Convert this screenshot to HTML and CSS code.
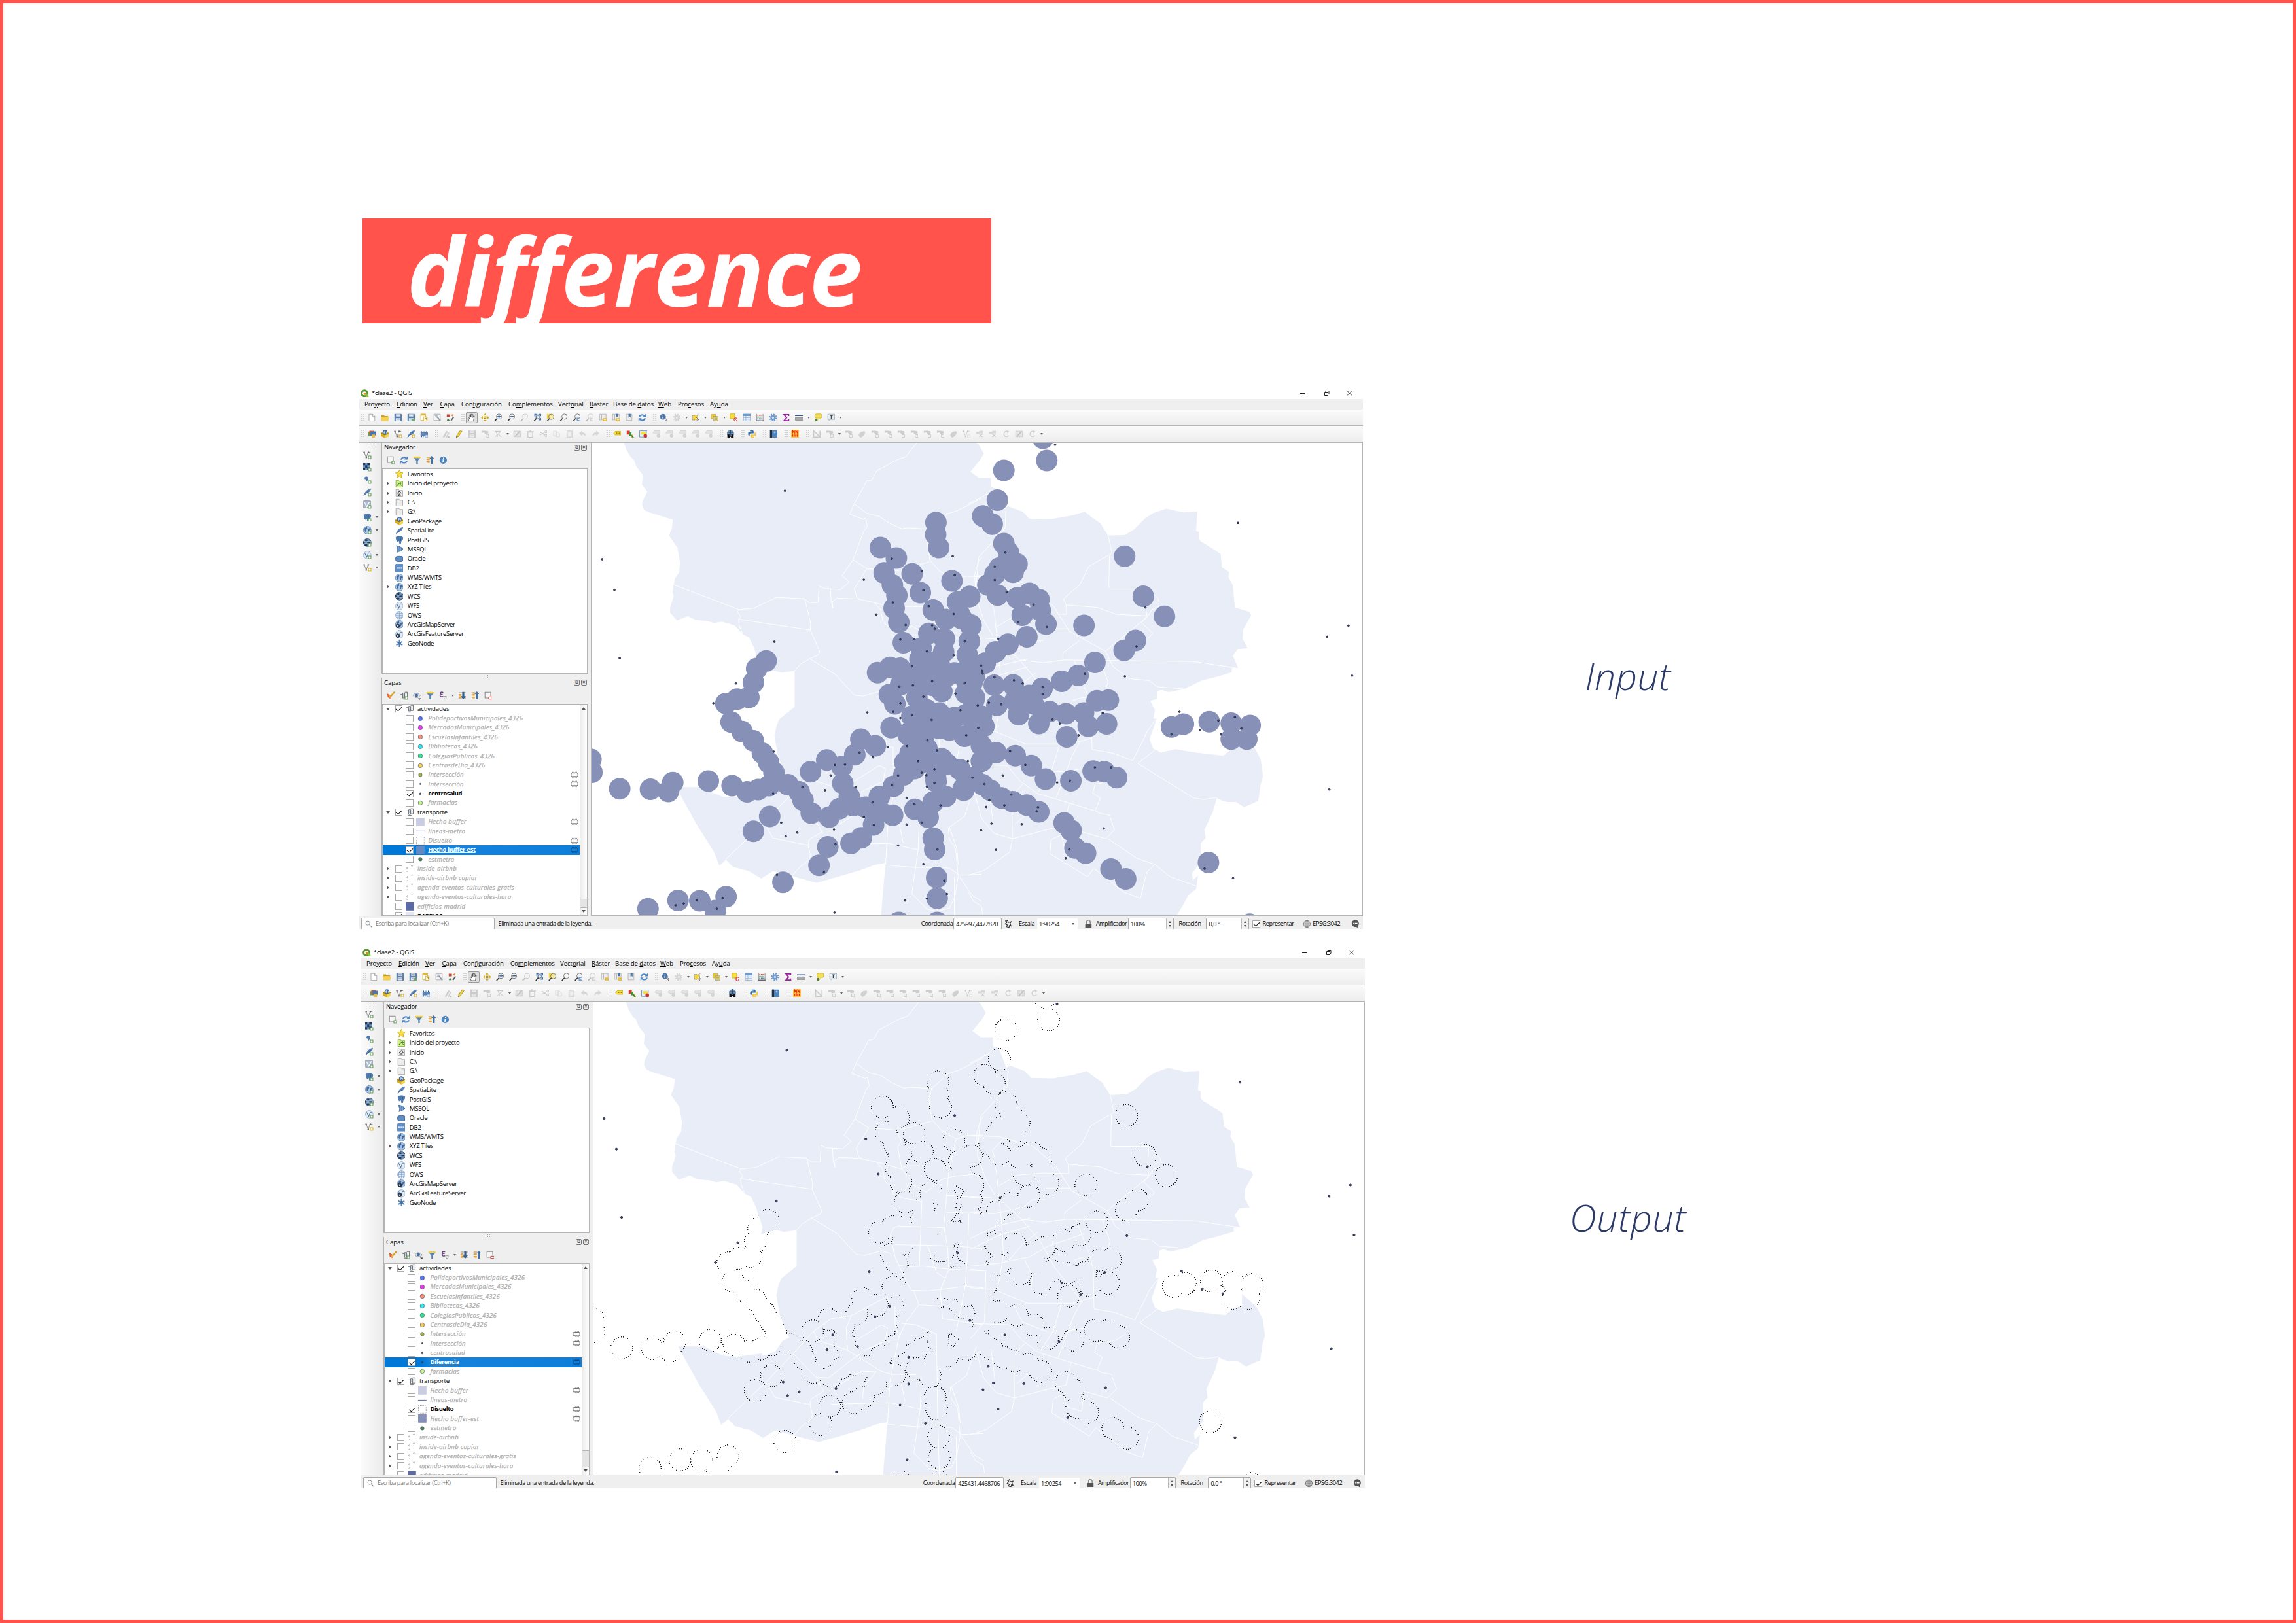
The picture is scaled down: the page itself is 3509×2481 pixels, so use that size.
FILE: index.html
```html
<!DOCTYPE html>
<html lang="es">
<head>
<meta charset="utf-8">
<title>difference</title>
<link rel="stylesheet" href="styles.css">
</head>
<body>
<svg class="sprite" aria-hidden="true">
  <symbol id="i-qgis" viewBox="0 0 16 16"><circle cx="7.6" cy="7.8" r="5.6" fill="none" stroke="#589632" stroke-width="3.6"/><path d="M8 8h4l3.6 4.500V15.500H12.500L8 11z" fill="#8bbf3c"/><circle cx="8" cy="8" r="2" fill="#ee7913"/></symbol>
  <symbol id="i-new" viewBox="0 0 16 16"><path d="M2.500 1.500h7l4 4v9h-11z" fill="#fff" stroke="#999"/><path d="M9.500 1.500v4h4" fill="none" stroke="#999"/></symbol>
  <symbol id="i-open" viewBox="0 0 16 16"><path d="M1 3h5l1.500 2H14v9H1z" fill="#c9a227"/><path d="M1 6.500h15L14 14H1z" fill="#f7d04f"/></symbol>
  <symbol id="i-save" viewBox="0 0 16 16"><path d="M1 1h13l1 1v13H1z" fill="#5b7fa8"/><path d="M4 1.500h8V6H4zM3.500 9h9v5.500h-9z" fill="#dfe6ee"/><path d="M5 3h6M5 11h6" stroke="#7b97b8"/></symbol>
  <symbol id="i-saveas" viewBox="0 0 16 16"><use href="#i-save"/><path d="M8 15l2-5 5 1v4z" fill="#72a36a"/></symbol>
  <symbol id="i-layout" viewBox="0 0 16 16"><path d="M1.500 1.500h9v12h-9z" fill="#fff" stroke="#b89a2a"/><path d="M1 1h10v3H1z" fill="#e2b53a"/><path d="M6.500 6.500h7v8h-7z" fill="#fdf3c9" stroke="#c9a227"/><path d="M9 9h3v3" fill="none" stroke="#8a6d10"/></symbol>
  <symbol id="i-manager" viewBox="0 0 16 16"><path d="M1.500 1.500h12v12h-12z" fill="#f6f6f6" stroke="#999"/><path d="M3 4h6M3 7h3" stroke="#aaa"/><path d="M6 5l8 9" stroke="#8c98a8" stroke-width="2.400"/><circle cx="6" cy="5" r="2" fill="#a9b8ca"/></symbol>
  <symbol id="i-style" viewBox="0 0 16 16"><path d="M1 2h6v5H1z" fill="#c1463c"/><circle cx="12" cy="3.500" r="2" fill="#d78a3a"/><path d="M3 9l4 5H1z" fill="#3f7d4b"/><path d="M9 14l5-7" stroke="#566" stroke-width="2.400"/></symbol>
  <symbol id="i-pan" viewBox="0 0 16 16"><path d="M4 15L1.500 9l1-.8L5 10V3.200l1.400-.4L7 7V1.600h1.500L9 7l.8-4.800h1.400L11 8l1.600-3.600 1.200.6L12.500 11 12 15z" fill="#fff" stroke="#333" stroke-width=".9"/></symbol>
  <symbol id="i-pansel" viewBox="0 0 16 16"><path d="M5 5h6v6H5z" fill="#f5d442"/><path d="M8 0l3 3.500H5zM8 16l3-3.500H5zM0 8l3.500-3v6zM16 8l-3.500-3v6z" fill="#d6a60d"/><path d="M6 7h4M6 9.500h4" stroke="#4f74a1"/></symbol>
  <symbol id="i-zoom" viewBox="0 0 16 16"><circle cx="9.500" cy="6" r="5" fill="#f4f6f8" stroke="#777" stroke-width="1.200"/><path d="M5.800 9.700L1 15" stroke="#333" stroke-width="2"/></symbol>
  <symbol id="i-zoomin" viewBox="0 0 16 16"><use href="#i-zoom"/><path d="M9.500 3v6M6.500 6h6" stroke="#3d6aa3" stroke-width="2"/></symbol>
  <symbol id="i-zoomout" viewBox="0 0 16 16"><use href="#i-zoom"/><path d="M6.500 6h6" stroke="#3d6aa3" stroke-width="2"/></symbol>
  <symbol id="i-zoomfull" viewBox="0 0 16 16"><path d="M2 1h5L2 6zM15 1v5l-5-5zM15 13V8l-5 5z" fill="#3d6aa3"/><path d="M4 2h9v9H4z" fill="#6e96c4" opacity=".7"/><circle cx="8.500" cy="7" r="3.200" fill="#dfe9f3" stroke="#667"/><path d="M6 9.500L1 15" stroke="#333" stroke-width="2"/></symbol>
  <symbol id="i-zoomsel" viewBox="0 0 16 16"><path d="M1 1h9v9H1z" fill="#f5d442"/><circle cx="9.500" cy="6.500" r="5" fill="#f8ec9e" stroke="#777" stroke-width="1.200"/><path d="M5.800 10L1 15" stroke="#333" stroke-width="2"/></symbol>
  <symbol id="i-zoomlast" viewBox="0 0 16 16"><use href="#i-zoom"/><path d="M8 8h7v7H8z" fill="#7c9dc4"/><path d="M13.500 9.500L10 11.500l3.500 2z" fill="#fff"/></symbol>
  <symbol id="i-view" viewBox="0 0 16 16"><path d="M1.500 1.500h3v11h-3zM5.500 1.500h8.500v11H5.500z" fill="#eee" stroke="#aaa"/><path d="M8 9h7v6H8z" fill="#e8bd3d"/><path d="M10 12h4" stroke="#fff"/></symbol>
  <symbol id="i-viewmark" viewBox="0 0 16 16"><use href="#i-view"/><path d="M8 1h4v7l-2-2-2 2z" fill="#4876ad"/></symbol>
  <symbol id="i-mark" viewBox="0 0 16 16"><path d="M2.500 1.500h11v12h-11z" fill="#eee" stroke="#aaa"/><path d="M7 1h4v7L9 6 7 8z" fill="#4876ad"/></symbol>
  <symbol id="i-refresh" viewBox="0 0 16 16"><path d="M2.500 7A5.500 5 0 0 1 12 4.500M13.500 9A5.500 5 0 0 1 4 11.500" fill="none" stroke="#4b86c6" stroke-width="2.600"/><path d="M15 1v6H9zM1 15V9h6z" fill="#4b86c6"/></symbol>
  <symbol id="i-identify" viewBox="0 0 16 16"><circle cx="6.500" cy="6.500" r="5.500" fill="#4876ad"/><path d="M6.500 3v1.500M6.500 6v4" stroke="#fff" stroke-width="1.800"/><path d="M9 8l6 4-3 .5L13.500 15" fill="#fff" stroke="#555"/></symbol>
  <symbol id="i-gear" viewBox="0 0 16 16"><circle cx="8" cy="8" r="5" fill="#6f9bcf"/><circle cx="8" cy="8" r="6" fill="none" stroke="#6f9bcf" stroke-width="3" stroke-dasharray="2.300 2.412"/><circle cx="8" cy="8" r="2" fill="#dbe6f3"/></symbol>
  <symbol id="i-select" viewBox="0 0 16 16"><path d="M1.500 3.500h10v9h-10z" fill="#f5d442" stroke="#777" stroke-dasharray="2 1"/><path d="M11 1.500h3.500V6" fill="none" stroke="#777" stroke-dasharray="2 1"/><path d="M8 7l6 5-3 .3L12.500 16" fill="#fff" stroke="#555"/></symbol>
  <symbol id="i-selform" viewBox="0 0 16 16"><path d="M1 2h9v8H1z" fill="#f0cf3b" stroke="#9a8a3a" stroke-width=".6"/><path d="M5 6h10v8H5z" fill="#f3dc6b" stroke="#888"/><path d="M7 9h6M7 11.500h6" stroke="#887"/></symbol>
  <symbol id="i-desel" viewBox="0 0 16 16"><path d="M1 1h9v9H1z" fill="#f7df3f" stroke="#c9a80f"/><circle cx="12" cy="12" r="3.400" fill="#fff" stroke="#dd3b3b" stroke-width="1.400"/><path d="M10 10l4 4" stroke="#dd3b3b"/></symbol>
  <symbol id="i-table" viewBox="0 0 16 16"><path d="M1.500 1.500h13v13h-13z" fill="#e8f0f8" stroke="#8aa9cc"/><path d="M1 1h14v4H1z" fill="#6f9bcf"/><path d="M2 8h12M2 11h12M6 5v9" stroke="#8aa9cc"/></symbol>
  <symbol id="i-abacus" viewBox="0 0 16 16"><path d="M2 1v13M14 1v13" stroke="#888"/><path d="M3 3.500h10" stroke="#cc4b4b" stroke-width="2" stroke-dasharray="2 1"/><path d="M3 7h10" stroke="#4f9d5b" stroke-width="2" stroke-dasharray="1.500 1"/><path d="M3 10.500h10" stroke="#4876ad" stroke-width="2" stroke-dasharray="2 1"/><path d="M0 13h16v2.500H0z" fill="#666"/></symbol>
  <symbol id="i-sigma" viewBox="0 0 16 16"><path d="M13 5V2.200H4L9 8l-5 5.800h9V11" fill="none" stroke="#9b1fa0" stroke-width="2.200"/></symbol>
  <symbol id="i-ruler" viewBox="0 0 16 16"><path d="M0 4h16" stroke="#36558a" stroke-width="2"/><path d="M.5 8h15v5H.5z" fill="#aaa" stroke="#888"/></symbol>
  <symbol id="i-tip" viewBox="0 0 16 16"><rect x="2" y="1" width="13" height="8" rx="3" fill="#f5e05b" stroke="#c5ab1d"/><path d="M6 9l1 4 4-4z" fill="#f5e05b"/><circle cx="4" cy="12.500" r="2.800" fill="#5a7a3a"/></symbol>
  <symbol id="i-text" viewBox="0 0 16 16"><path d="M1.500 1.500h13v10h-8L4 14v-2.500H1.500z" fill="#e6f0f4" stroke="#9ab"/><path d="M5 4h6M8 4v6" stroke="#444" stroke-width="1.600"/></symbol>
  <symbol id="i-source" viewBox="0 0 16 16"><path d="M1 4h8v8H1z" fill="#5fa15a"/><path d="M3 2h9v8H3z" fill="#d5602f"/><path d="M5 3h10v8H5z" fill="#4876ad"/><path d="M8 9h6v6H8z" fill="#e8bd3d"/></symbol>
  <symbol id="i-geopkg" viewBox="0 0 16 16"><path d="M0 6l8-3 8 3v6l-8 4-8-4z" fill="#d9ac20"/><path d="M8 9v7l8-4V6z" fill="#f3d94e"/><circle cx="8" cy="5" r="4.600" fill="#44699b"/><path d="M5 4l3-2 1 3-3 3zM10 3l2 2-2 3z" fill="#b9cde6"/><path d="M0 6l8 4 8-4" fill="none" stroke="#8c6b0b"/></symbol>
  <symbol id="i-vec" viewBox="0 0 16 16"><path d="M2 3l4 10L9.500 3H14" fill="none" stroke="#888" stroke-width="1.200"/><circle cx="2" cy="3" r="1.500" fill="#666"/><circle cx="6" cy="13" r="1.500" fill="#666"/><circle cx="10" cy="3" r="1.500" fill="#666"/></symbol>
  <symbol id="i-vecnew" viewBox="0 0 16 16"><use href="#i-vec"/><path d="M10 10h5v5h-5z" fill="#fff" stroke="#d9a90d" stroke-width="1.500"/></symbol>
  <symbol id="i-vecadd" viewBox="0 0 16 16"><use href="#i-vec"/><path d="M10 10h5v5h-5z" fill="#fff" stroke="#5c9c55" stroke-width="1.500"/></symbol>
  <symbol id="i-feather" viewBox="0 0 16 16"><path d="M1 15C3 7 8 2 15 1c0 5-5 9-10 10z" fill="#5b84b5"/><path d="M1 15L11 5" stroke="#2d4f7c"/></symbol>
  <symbol id="i-feathernew" viewBox="0 0 16 16"><use href="#i-feather"/><path d="M10 10h5v5h-5z" fill="#fff" stroke="#d9a90d" stroke-width="1.500"/></symbol>
  <symbol id="i-featheradd" viewBox="0 0 16 16"><use href="#i-feather"/><path d="M10 10h5v5h-5z" fill="#fff" stroke="#5c9c55" stroke-width="1.500"/></symbol>
  <symbol id="i-mem" viewBox="0 0 16 16"><path d="M1 5h14v7H1z" fill="#5b84b5"/><path d="M3 3v2M6 3v2M9 3v2M12 3v2M3 12v2M6 12v2" stroke="#2d4f7c" stroke-width="1.500"/><path d="M10 10h5v5h-5z" fill="#d9e5f3" stroke="#6f9bcf"/></symbol>
  <symbol id="i-edits" viewBox="0 0 16 16"><path d="M2 14L9 2l3 2-7 11zM8 14l5-9 2 1-5 9z" fill="#888"/><path d="M11 13h5l-2.500 3z" fill="#333"/></symbol>
  <symbol id="i-pencil" viewBox="0 0 16 16"><path d="M3 15l1-5L11 1l3 2-7 10z" fill="#f0cf3b" stroke="#8c7410" stroke-width=".8"/><path d="M3 15l.6-3 2 1.400z" fill="#333"/></symbol>
  <symbol id="i-poly" viewBox="0 0 16 16"><path d="M1 2h8l5 1v4L8 8 6 5 1 6z" fill="#777"/><path d="M9.500 9.500h5v5h-5z" fill="#eee" stroke="#666"/></symbol>
  <symbol id="i-node" viewBox="0 0 16 16"><path d="M2 3h11M4 3l3 10M3 13l9-9M8 8l6 6" stroke="#777" stroke-width="1.400" fill="none"/></symbol>
  <symbol id="i-form" viewBox="0 0 16 16"><path d="M1.500 2.500h13v11h-13z" fill="#aaa" stroke="#777"/><path d="M2 6h12M2 10h12M7 3v10" stroke="#eee"/><path d="M4 13l9-10" stroke="#555" stroke-width="2"/></symbol>
  <symbol id="i-trash" viewBox="0 0 16 16"><path d="M3.500 4.500h9v10h-9zM1 3.500h14M6 1.500h4" fill="none" stroke="#b06060" stroke-width="1.500"/></symbol>
  <symbol id="i-cut" viewBox="0 0 16 16"><path d="M1 4l10 6M1 10l10-5" stroke="#777" stroke-width="1.500"/><circle cx="13" cy="4" r="2" fill="none" stroke="#777" stroke-width="1.300"/><circle cx="13" cy="11" r="2" fill="none" stroke="#777" stroke-width="1.300"/></symbol>
  <symbol id="i-copy" viewBox="0 0 16 16"><path d="M2.500 2.500h6v9h-6zM7 4.500h4l3 3v6H7z" fill="#eee" stroke="#999"/></symbol>
  <symbol id="i-paste" viewBox="0 0 16 16"><path d="M3 2h10v13H3z" fill="#bbb" stroke="#888"/><path d="M5.500 5h5v7h-5z" fill="#eee"/></symbol>
  <symbol id="i-undo" viewBox="0 0 16 16"><path d="M1 7l6-5v3c5 0 7 3 7 8-2-3-4-4-7-4v3z" fill="#999"/></symbol>
  <symbol id="i-redo" viewBox="0 0 16 16"><path d="M15 7L9 2v3c-5 0-7 3-7 8 2-3 4-4 7-4v3z" fill="#999"/></symbol>
  <symbol id="i-label" viewBox="0 0 16 16"><path d="M1 7l3-4h11v7H4z" fill="#f7df3f" stroke="#c9a80f"/><path d="M5.500 6.500h8" stroke="#7a6500" stroke-width="1.600" stroke-dasharray="2 .7"/></symbol>
  <symbol id="i-diagram" viewBox="0 0 16 16"><path d="M1 2h6v7H1z" fill="#d93a2b"/><path d="M6 5h4v7H6z" fill="#2d9b3d"/><path d="M10 9h3v6h-3z" fill="#e4b61a"/><path d="M9 10l5 5" stroke="#237a30" stroke-width="2"/></symbol>
  <symbol id="i-labelpin" viewBox="0 0 16 16"><path d="M.7 2h14.600v12H.7z" fill="#e9f1f9" stroke="#5b84b5"/><path d="M3 4h10v5H3z" fill="#f7df3f"/><circle cx="11.500" cy="11.500" r="3.400" fill="#c9302c"/></symbol>
  <symbol id="i-labeloff" viewBox="0 0 16 16"><path d="M1 6l3-4h10v6H4z" fill="#bbb" stroke="#888"/><circle cx="11.500" cy="11.500" r="2.800" fill="#999" stroke="#777"/></symbol>
  <symbol id="i-csw" viewBox="0 0 16 16"><circle cx="8" cy="7" r="6.800" fill="#6d93bd"/><path d="M2 5h12M2 9h12M8 0v9" stroke="#234" /><path d="M2 9h4v2h4V9h4v6h-5v-2H7v2H2z" fill="#111"/></symbol>
  <symbol id="i-python" viewBox="0 0 16 16"><path d="M4 1h5a2 2 0 0 1 2 2v4H5.500a2 2 0 0 0-2 2v2H2a2 2 0 0 1-1.500-2V6a2 2 0 0 1 2-2H7V3H4z" fill="#3572a5"/><path d="M12 15H7a2 2 0 0 1-2-2V9.500h6a2 2 0 0 0 2-2V5h1a2 2 0 0 1 1.500 2v3a2 2 0 0 1-2 2H9v1h3z" fill="#f3c93b"/></symbol>
  <symbol id="i-book" viewBox="0 0 16 16"><path d="M1 1h14v14H1z" fill="#4f83bb"/><path d="M1 1h4v14H1z" fill="#24313f"/><path d="M10 3v4M8 5h4" stroke="#cfe0f2"/></symbol>
  <symbol id="i-nn" viewBox="0 0 16 16"><rect x="0" y="0" width="16" height="16" rx="3" fill="#ffc52e"/><path d="M3 7V1.500L6.500 7V1.500M9 7V1.500L12.500 7V1.500" fill="none" stroke="#e1251b" stroke-width="1.400"/><path d="M2 11h12" stroke="#e1251b" stroke-width="4" stroke-dasharray="2 1"/></symbol>
  <symbol id="i-tri" viewBox="0 0 16 16"><path d="M2 2v12h12zM14 2v12" fill="none" stroke="#777" stroke-width="2"/></symbol>
  <symbol id="i-blob" viewBox="0 0 16 16"><path d="M2 12c-2-5 6-10 11-9 4 2-3 11-8 12z" fill="#888"/></symbol>
  <symbol id="i-scis" viewBox="0 0 16 16"><path d="M1 4h5l2-2h6v5H8L6 8H1z" fill="#999"/><path d="M7 14l6-6M7 8l6 6" stroke="#777" stroke-width="1.500"/></symbol>
  <symbol id="i-rot" viewBox="0 0 16 16"><path d="M12 4a5 5 0 1 0 1 7" fill="none" stroke="#888" stroke-width="1.800"/><path d="M9 1l5 2-3 4z" fill="#777"/></symbol>
  <symbol id="i-checker" viewBox="0 0 16 16"><path d="M0 0h13v13H0z" fill="#6f93bd"/><path d="M0 0h4v4H0zM8 0h5v4H8zM4 4h4v5H4zM0 9h4v4H0zM8 8h5v5H8z" fill="#1f3a5f"/><path d="M10 10h5v5h-5z" fill="#fff" stroke="#5c9c55" stroke-width="1.500"/></symbol>
  <symbol id="i-comma" viewBox="0 0 16 16"><path d="M3 3c4-3 8 0 7 4-1 2-2 3-5 5 2-3 2-4 0-5-2 0-3-2-2-4z" fill="#4876ad"/><path d="M10 10h5v5h-5z" fill="#fff" stroke="#5c9c55" stroke-width="1.500"/></symbol>
  <symbol id="i-virtual" viewBox="0 0 16 16"><path d="M1 1h13v13H1z" fill="#aebfd2" stroke="#778"/><path d="M3 4l4 8 5-9" fill="none" stroke="#fff" stroke-width="1.500"/><path d="M10 10h5v5h-5z" fill="#fff" stroke="#5c9c55" stroke-width="1.500"/></symbol>
  <symbol id="i-pg" viewBox="0 0 16 16"><path d="M1 3c2-3 12-3 14 0 1 3-1 6-3 7l-1 5H8l-1-5-3 2C2 9 1 6 1 3z" fill="#4f7bb0"/><path d="M6 3v6M10 3c1 3 0 4 0 7" stroke="#2d4f7c" fill="none"/></symbol>
  <symbol id="i-pgadd" viewBox="0 0 16 16"><use href="#i-pg"/><path d="M10 10h5v5h-5z" fill="#fff" stroke="#5c9c55" stroke-width="1.500"/></symbol>
  <symbol id="i-mssql" viewBox="0 0 16 16"><path d="M1 1c6 0 12 3 15 7-3 4-7 5-11 6L3 15c2-5 1-10-2-14z" fill="#4f7bb0"/><path d="M6 3c2 4 2 7 0 10M10 4c1 3 1 5 0 8" stroke="#a9c1dd" fill="none"/></symbol>
  <symbol id="i-oracle" viewBox="0 0 16 16"><rect x=".8" y="3" width="14.400" height="10" rx="3.500" fill="#5f8dc4" stroke="#2d4f7c"/></symbol>
  <symbol id="i-db2" viewBox="0 0 16 16"><rect x="0" y="0" width="16" height="16" rx="2" fill="#5f8fc6"/><path d="M2.500 8h11" stroke="#d5e3f3" stroke-width="3" stroke-dasharray="3 1"/></symbol>
  <symbol id="i-globe" viewBox="0 0 16 16"><circle cx="8" cy="8" r="7.500" fill="#a9c3e2" stroke="#5b84b5"/><path d="M3 4l4-2 1 3-3 3 1 4-3-2zM9 6l4-2 2 3-3 1-1 4-2-2z" fill="#3f6798"/></symbol>
  <symbol id="i-globeadd" viewBox="0 0 16 16"><use href="#i-globe"/><path d="M10 10h5v5h-5z" fill="#fff" stroke="#5c9c55" stroke-width="1.500"/></symbol>
  <symbol id="i-wcs" viewBox="0 0 16 16"><circle cx="8" cy="8" r="7.500" fill="#6f93bd" stroke="#345"/><path d="M4 2h4v4H4zM8 6h5v4H8zM3 10h5v4H3zM0 6h3v4H0z" fill="#1f3a5f"/><path d="M1 6h14M1 10h14" stroke="#cfdcea"/></symbol>
  <symbol id="i-wcsadd" viewBox="0 0 16 16"><use href="#i-wcs"/><path d="M10 10h5v5h-5z" fill="#fff" stroke="#5c9c55" stroke-width="1.500"/></symbol>
  <symbol id="i-wfs" viewBox="0 0 16 16"><circle cx="8" cy="8" r="7.300" fill="#e3edf8" stroke="#7fa3cf"/><path d="M3 4l4 8 3-8h3" fill="none" stroke="#5b7697" stroke-width="1.400"/></symbol>
  <symbol id="i-wfsadd" viewBox="0 0 16 16"><use href="#i-wfs"/><path d="M10 10h5v5h-5z" fill="#fff" stroke="#5c9c55" stroke-width="1.500"/></symbol>
  <symbol id="i-ows" viewBox="0 0 16 16"><circle cx="8" cy="8" r="7.300" fill="#e9f1fa" stroke="#7fa3cf"/><path d="M1 8h14M2 4.500h12M2 11.500h12M8 1v14M4.500 2c-2 4-2 8 0 12M11.500 2c2 4 2 8 0 12" fill="none" stroke="#7fa3cf"/></symbol>
  <symbol id="i-arc" viewBox="0 0 16 16"><use href="#i-globe"/><circle cx="5" cy="11" r="4" fill="#2b3b4d"/><circle cx="5" cy="11" r="1.500" fill="#dde"/></symbol>
  <symbol id="i-arcf" viewBox="0 0 16 16"><use href="#i-wfs"/><circle cx="5" cy="11" r="4" fill="#2b3b4d"/><circle cx="5" cy="11" r="1.500" fill="#dde"/></symbol>
  <symbol id="i-geonode" viewBox="0 0 16 16"><path d="M8 1v14M2 4.500l12 7M14 4.500l-12 7" stroke="#5b84b5" stroke-width="2.400"/><circle cx="8" cy="8" r="3" fill="#4672a6"/></symbol>
  <symbol id="i-star" viewBox="0 0 16 16"><path d="M8 .5l2.200 5 5.300.6-4 3.700 1.200 5.400L8 12.500l-4.700 2.700 1.200-5.400-4-3.700 5.300-.6z" fill="#f9e04a" stroke="#c9a80f"/></symbol>
  <symbol id="i-proj" viewBox="0 0 16 16"><path d="M1.500 1.500h5l1 2h7v11h-13z" fill="#d8ef8f" stroke="#789a2b"/><path d="M3 12l5-5 5 5M10 5v5M7 7h6" stroke="#3d8a2b" stroke-width="1.600" fill="none"/></symbol>
  <symbol id="i-home" viewBox="0 0 16 16"><path d="M1.500 1.500h5l1 2h7v11h-13z" fill="#eee" stroke="#999"/><path d="M4 9l4-4 4 4M5.500 9v4h2v-3h2v3h1" fill="none" stroke="#333" stroke-width="1.300"/></symbol>
  <symbol id="i-folder" viewBox="0 0 16 16"><path d="M1.500 1.500h6l1.500 2h5.500v11h-13z" fill="#ededed" stroke="#999"/></symbol>
  <symbol id="i-add" viewBox="0 0 16 16"><path d="M1.500 1.500h11v11h-11z" fill="#f6f6f6" stroke="#888" stroke-width="1.300"/><path d="M10 10h5v5h-5z" fill="#fff" stroke="#5c9c55" stroke-width="1.500"/></symbol>
  <symbol id="i-remove" viewBox="0 0 16 16"><path d="M10 12.500H1.500v-11h11V9" fill="#f6f6f6" stroke="#888" stroke-width="1.300"/><rect x="8.500" y="10.500" width="7" height="4" rx="1.500" fill="#fff" stroke="#d9534f" stroke-width="1.500"/></symbol>
  <symbol id="i-filter" viewBox="0 0 16 16"><path d="M1 1h14v3H1z" fill="#f5d442"/><path d="M2 4h12L9.500 9v6h-3V9z" fill="#5b84b5"/></symbol>
  <symbol id="i-collapse" viewBox="0 0 16 16"><path d="M1 2.500h7M1 6.500h6M1 11h6" stroke="#b98a2a" stroke-width="1.500"/><path d="M3 4.500h4v3.500H3zM3 10h4v3.500H3z" fill="#f0a23a"/><path d="M11 0l4.500 5H13v10H9V5H6.500z" fill="#44719f"/></symbol>
  <symbol id="i-expand" viewBox="0 0 16 16"><path d="M1 2.500h14M1 6.500h6M1 12.500h14" stroke="#999" stroke-width="1.300"/><path d="M2 5h4v3.500H2zM2 9.500h4V13H2z" fill="#f0a23a"/><path d="M10 15l5-6h-3V1H8v8H5z" fill="#36618f"/></symbol>
  <symbol id="i-info" viewBox="0 0 16 16"><circle cx="8" cy="8" r="7" fill="#4f83bb"/><path d="M8.500 3v2M8 6.500l-.5 6" stroke="#fff" stroke-width="2"/></symbol>
  <symbol id="i-brush" viewBox="0 0 16 16"><path d="M1 4l8 4-2 6-5-3z" fill="#e2572e"/><path d="M3 7l6 1-2 6z" fill="#f3a73a"/><path d="M8 9l7-8" stroke="#d8a020" stroke-width="2.600"/></symbol>
  <symbol id="i-group" viewBox="0 0 16 16"><path d="M1.500 5.500h3v9h8" fill="none" stroke="#777" stroke-width="1.200"/><path d="M5.500 3.500h4v9h-4zM9.500 1.500h5v10h-5" fill="#f1f1f1" stroke="#666" stroke-width="1.200"/><path d="M8 5v5" stroke="#36618f" stroke-width="1.600"/></symbol>
  <symbol id="i-groupadd" viewBox="0 0 16 16"><use href="#i-group"/><path d="M10 10h5v5h-5z" fill="#fff" stroke="#5c9c55" stroke-width="1.500"/></symbol>
  <symbol id="i-eye" viewBox="0 0 16 16"><path d="M0 8c4-6 10-6 14 0-4 5-10 5-14 0z" fill="#dbe4ee" stroke="#888"/><circle cx="7" cy="7.500" r="3" fill="#44719f"/><path d="M10 13h6l-3 3z" fill="#333"/></symbol>
  <symbol id="i-eps" viewBox="0 0 16 16"><path d="M8 2C4 0 1 3 4 5.500 0 7 2 11.500 8 9.500M4 5.500h3" fill="none" stroke="#6b3f86" stroke-width="1.800"/><path d="M9 9.500h5l-1 5h-3z" fill="#eee" stroke="#888"/></symbol>
  <symbol id="i-pts" viewBox="0 0 16 16"><circle cx="3" cy="6" r="1.200" fill="none" stroke="#888" stroke-width=".8"/><circle cx="12" cy="2" r="1.200" fill="none" stroke="#888" stroke-width=".8"/><path d="M2 13l3-1" stroke="#888"/></symbol>
  <symbol id="i-chip" viewBox="0 0 16 14"><rect x="1.200" y="3.500" width="13.600" height="7" rx="1.500" fill="none" stroke="currentColor" stroke-width="1.200"/><path d="M3.500 1v2M6.500 1v2M9.500 1v2M12.500 1v2M3.500 11v2M6.500 11v2M9.500 11v2M12.500 11v2" stroke="currentColor"/></symbol>
  <symbol id="i-search" viewBox="0 0 16 16"><circle cx="6" cy="6" r="4.500" fill="none" stroke="#888" stroke-width="1.300"/><path d="M9.500 9.500L15 15" stroke="#888" stroke-width="1.600"/></symbol>
  <symbol id="i-extent" viewBox="0 0 16 16"><path d="M3 2l3 3-3 3 4 2-2 3 5 2 1-4 3 1-2-5 2-3-5 1-2-4-2 2z" fill="none" stroke="#333" stroke-width="1.500"/></symbol>
  <symbol id="i-lock" viewBox="0 0 16 16"><path d="M4.500 8V5a3.500 4 0 0 1 7 0v3" fill="none" stroke="#888" stroke-width="1.800"/><rect x="2" y="7.500" width="12" height="8" fill="#555"/></symbol>
  <symbol id="i-crs" viewBox="0 0 16 16"><circle cx="8" cy="8" r="6.500" fill="#999" stroke="#555"/><path d="M1 6h14M1 10h14M8 1v14M5 2c-2 4-2 8 0 12M11 2c2 4 2 8 0 12" fill="none" stroke="#eee" stroke-width=".8"/></symbol>
  <symbol id="i-msg" viewBox="0 0 16 16"><circle cx="8" cy="7" r="6.800" fill="#555"/><path d="M8 12l5 4-1-5z" fill="#555"/><path d="M4 7h8" stroke="#fff" stroke-width="2" stroke-dasharray="2 1"/></symbol>
</svg>

<main class="sheet">
  <h1 class="heading"><span class="heading-text">difference</span></h1>
  <section class="step">
    <div class="win" data-project="input"></div>
    <p class="caption"><span>Input</span></p>
  </section>
  <section class="step step-second">
    <div class="win" data-project="output"></div>
    <p class="caption"><span>Output</span></p>
  </section>
</main>

<template id="window-template">
  <header class="titlebar">
    <svg class="ico"><use href="#i-qgis"/></svg><span class="title-text">*clase2 - QGIS</span>
    <svg class="winbtns" viewBox="0 0 92 10"><path d="M1 5.500h8M38.500 3.500h5v5h-5zM40 3V1.500h5v5h-1.500M73 1.500l7 7M80 1.500l-7 7" fill="none" stroke="#222"/></svg>
  </header>
  <nav class="menubar"></nav>
  <div class="toolbar toolbar-main"></div>
  <div class="toolbar toolbar-edit"></div>
  <div class="body">
    <aside class="rail"></aside>
    <div class="dock">
      <section class="panel browser">
        <div class="panel-title"><span>Navegador</span><i class="pbtn">⧉</i><i class="pbtn">✕</i></div>
        <div class="panel-tools browser-tools"></div>
        <div class="tree browser-tree"></div>
      </section>
      <div class="splitter"></div>
      <section class="panel layers">
        <div class="panel-title"><span>Capas</span><i class="pbtn">⧉</i><i class="pbtn">✕</i></div>
        <div class="panel-tools layer-tools"></div>
        <div class="tree layer-box">
          <div class="layer-tree"></div>
          <div class="scroll"><i class="up"></i><i class="thumb"></i><i class="down"></i></div>
        </div>
      </section>
    </div>
    <div class="canvas"></div>
  </div>
  <footer class="status">
    <div class="locator"><svg class="ico"><use href="#i-search"/></svg><span class="t t-loc">Escriba para localizar (Ctrl+K)</span></div>
    <span class="t t-msg">Eliminada una entrada de la leyenda.</span>
    <div class="status-right">
      <span class="t w-coord">Coordenada</span><span class="field f-coord"></span>
      <svg class="ico g-ext"><use href="#i-extent"/></svg>
      <span class="t w-scale">Escala</span><span class="field f-scale">1:90254<i class="caret"></i></span>
      <svg class="ico g-lock"><use href="#i-lock"/></svg>
      <span class="t w-mag">Amplificador</span><span class="field f-mag">100%<i class="spin"></i></span>
      <span class="t w-rot">Rotación</span><span class="field f-rot">0,0 °<i class="spin"></i></span>
      <span class="check on"></span><span class="t w-rep">Representar</span>
      <svg class="ico g-crs"><use href="#i-crs"/></svg><span class="t w-epsg">EPSG:3042</span>
      <svg class="ico g-msg"><use href="#i-msg"/></svg>
    </div>
  </footer>
</template>
<script src="script.js"></script>
</body>
</html>
```
FILE: styles.css
```css
* { box-sizing: border-box; }
body { margin: 0; background: #fff; font-family: "Open Sans", "Noto Sans", sans-serif; }
.sprite { position: absolute; width: 0; height: 0; }
.sheet { width: 3509px; height: 2481px; border: 5px solid #ff534c; padding: 329px 0 0 544px; }

.heading { margin: 0 0 96px 5px; width: 961px; height: 160px; background: #ff534c; color: #fff; overflow: hidden; font-weight: 700; font-style: italic; font-size: 146px; line-height: 158px; padding-left: 68px; font-variant-ligatures: none; letter-spacing: -.8px; }
.heading-text { display: inline-block; white-space: nowrap; }

.step { display: flex; align-items: flex-start; height: 830px; }
.step-second { margin: 25px 0 0 3px; }
.caption { margin: 0; width: 810px; padding-top: 405px; text-align: center; font-style: italic; font-weight: 300; font-size: 57px; line-height: 76px; letter-spacing: .4px; color: #2b3a67; }
.step-second .caption { width: 804px; padding-top: 378px; letter-spacing: .8px; }
.caption span { display: inline-block; }

.win { width: 1534px; height: 830px; display: flex; flex-direction: column; font-size: 9.6px; line-height: 14px; color: #000; background: #efefef; }
.ico { width: 12.8px; height: 12.8px; flex: none; display: block; }
.t { white-space: nowrap; display: inline-block; }

.titlebar { height: 20px; background: #fff; display: flex; align-items: center; padding: 2px 5px 0 2px; }
.title-text { margin-left: 4px; flex: 1; letter-spacing: -.1px; }
.winbtns { width: 92px; height: 10px; }
.menubar { height: 16px; background: #efefef; display: flex; align-items: center; padding-left: 8px; }
.menubar span { flex: none; white-space: nowrap; letter-spacing: -.05px; }
.toolbar { height: 25px; display: flex; align-items: center; background: linear-gradient(#fbfbfb, #ededed); border-bottom: 1px solid #b4b4b4; }
.toolbar-edit { height: 26px; border-bottom-width: 2px; }
.slot { width: 20px; display: flex; justify-content: center; align-items: center; flex: none; height: 18px; }
.slot.pressed { width: 18.500px; margin: 0 1px 0 .5px; height: 17px; border: 1px solid #999; border-radius: 2px; background: #dedede; }
.slot.off .ico { opacity: .32; filter: grayscale(1); }
.grip { width: 9px; margin-left: 4px; height: 13px; flex: none; background: radial-gradient(circle, #aaa .7px, transparent .9px) 2px 0 / 3px 3px; background-clip: content-box; padding: 0 1.500px; }
.grip:first-child { margin-left: 0; }
.drop { width: 9px; flex: none; display: flex; justify-content: center; }
.drop::before, .caret::before { content: ""; border: 2.800px solid transparent; border-top: 3.400px solid #666; border-bottom: 0; }

.body { height: 723px; display: flex; }
.rail { width: 34px; background: linear-gradient(90deg, #fbfbfb, #ebebeb); display: flex; flex-direction: column; flex: none; }
.rail .dots { height: 8.400px; margin-left: 12px; width: 12px; background: radial-gradient(circle, #aaa .7px, transparent .9px) 0 2px / 3px 3px; }
.rail .tool { height: 19.200px; display: flex; align-items: center; padding-left: 6px; gap: 4px; }
.dock { width: 321px; flex: none; display: flex; flex-direction: column; border-right: 1px solid #b4b4b4; background: #efefef; padding-right: 5px; }
.panel { display: flex; flex-direction: column; border-left: 1px solid #b4b4b4; }
.browser { height: 353px; }
.splitter { height: 6px; background: radial-gradient(circle, #aaa .7px, transparent .9px) 0 1px / 3px 3px; width: 13px; margin-left: 152px; }
.layers { height: 364px; }
.panel-title { height: 14px; display: flex; align-items: center; padding: 0 1px 0 3px; gap: 2px; }
.panel-title span { margin-right: auto; letter-spacing: -.1px; }
.layers .panel-title { height: 15px; }
.pbtn { width: 9px; height: 9px; border: 1px solid #777; border-radius: 2px; font: 7px/7px "DejaVu Sans", sans-serif; text-align: center; color: #444; }
.panel-tools { height: 25px; display: flex; align-items: center; padding-left: 3px; }
.layer-tools { height: 24.500px; }
.tree { border: 1px solid #b4b4b4; background: #fff; overflow: hidden; }
.browser-tree { height: 314px; padding-top: .7px; }
.browser-tree .name { letter-spacing: -.28px; }
.layer-box { flex: 1; display: flex; min-height: 0; }
.layer-tree { flex: 1; overflow: hidden; }
.row { height: 14.390px; display: flex; align-items: center; }
.twist { width: 7px; margin-left: 4.500px; flex: none; display: flex; justify-content: center; }
.twist.closed::before { content: ""; border: 3px solid transparent; border-left: 4px solid #555; border-right: 0; }
.twist.open::before { content: ""; border: 3px solid transparent; border-top: 4px solid #555; border-bottom: 0; }
.browser-tree .ico { margin: 0 6.500px 0 7px; }
.check { width: 11.500px; height: 11px; border: 1px solid #aaa; background: #fff; flex: none; position: relative; }
.check.on::after { content: ""; position: absolute; left: 2.500px; top: 0; width: 4px; height: 7px; border: solid #000; border-width: 0 1.400px 1.400px 0; transform: rotate(38deg) skewX(-8deg); }
.row .check { margin-left: 7px; }
.row.child .check { margin-left: 23.500px; }
.sym { width: 13px; height: 13px; margin: 0 5px 0 5px; flex: none; display: flex; align-items: center; justify-content: center; }
.row.child .sym { margin: 0 5.500px 0 4.500px; }
.name { white-space: nowrap; }
.layer-tree .name { letter-spacing: -.15px; }
.hidden .name { color: #adadad; font-style: italic; -webkit-text-stroke: .25px #adadad; }
.layer-tree .hidden .name { letter-spacing: .3px; }
.strong .name { font-weight: 700; font-size: 9.300px; }
.layer-tree .strong .name { letter-spacing: -.35px; }
.chip { width: 12px; height: 10.500px; margin-left: auto; margin-right: 1.500px; color: #555; flex: none; }
.row.selected { background: linear-gradient(90deg, #0078d7 18%, #1683dc 23%, #0d7ed9); }
.row.selected .name { color: #fff; font-style: normal; text-decoration: underline; }
.row.selected .chip { color: #0b3f73; }
.scroll { width: 11.500px; border-left: 1px solid #b4b4b4; background: linear-gradient(90deg, #ececec, #fff); display: flex; flex-direction: column; align-items: center; }
.up { border: 3px solid transparent; border-bottom: 4px solid #555; border-top: 0; margin: 4px 0 auto; }
.thumb { width: 100%; height: 14px; background: #e4e4e4; border: solid #b4b4b4; border-width: 1px 0; }
.tall .thumb { height: 26px; }
.down { border: 3px solid transparent; border-top: 4px solid #555; border-bottom: 0; margin: 3px 0 4px; }

.canvas { flex: 1; min-width: 0; background: #fff; border-right: 1px solid #b4b4b4; border-bottom: 1px solid #b4b4b4; overflow: hidden; }
.canvas svg { display: block; width: 1180px; height: 723px; }
.land { fill: #e9edf7; }
.limits { fill: none; stroke: #fff; stroke-width: 1; stroke-linejoin: round; }
.buffers { fill: #8790b7; }
.outline { fill: none; stroke: #222; stroke-width: 1.900; stroke-dasharray: .9 2.550; shape-rendering: crispEdges; }
.sites { fill: #3d4a78; stroke: #1f2638; stroke-width: .9; }

.status { height: 20px; display: flex; align-items: center; padding: 4px 0 0 3px; overflow: hidden; font-size: 9.100px; letter-spacing: -.36px; }
.locator { width: 204px; height: 18px; border: 1px solid #a9a9a9; border-radius: 2px; background: #fff; display: flex; align-items: center; padding-left: 5px; flex: none; color: #777; }
.locator .ico { width: 11px; height: 11px; margin-right: 5px; }
.t-msg { margin-left: 5.500px; }
.status-right { margin-left: auto; display: flex; align-items: center; padding-right: 5px; height: 18px; }
.status-right .t { flex: none; }
.field { height: 18px; border: 1px solid #a9a9a9; border-radius: 2px; background: #fff; padding: 1px 0 0 3px; display: flex; align-items: center; white-space: nowrap; flex: none; overflow: hidden; }
.w-coord { width: 49.500px; } .f-coord { width: 73.500px; letter-spacing: -.45px; } .g-ext { margin: 0 10px 0 3.500px; }
.w-scale { width: 27px; } .f-scale { width: 63.500px; border-color: #efefef; } .g-lock { margin: 0 5.500px 0 9px; }
.w-mag { width: 49px; letter-spacing: -.55px; } .f-mag { width: 70px; margin-right: 7.500px; }
.w-rot { width: 42px; } .f-rot { width: 65.500px; margin-right: 5.500px; }
.w-rep { width: 62px; margin-left: 3.500px; } .g-crs { margin-right: 2px; } .w-epsg { width: 59px; }
.caret { margin: 0 5px 0 auto; display: flex; }
.spin { margin-left: auto; width: 11px; height: 18px; border-left: 1px solid #bbb; background: #f1f1f1; display: flex; flex-direction: column; align-items: center; justify-content: center; gap: 3px; }
.spin::before { content: ""; border: 2.500px solid transparent; border-bottom: 3px solid #555; border-top: 0; }
.spin::after { content: ""; border: 2.500px solid transparent; border-top: 3px solid #555; border-bottom: 0; }
```
FILE: script.js
```js
// "|" grip, "v" drop-down arrow, "-" prefix disabled, "+" prefix pressed
const MAIN = '| new open save saveas layout manager style | +pan pansel zoomin zoomout -zoom zoomfull zoomsel zoom zoomlast -zoomlast view viewmark mark refresh | identify -gear v select v selform v desel table abacus gear sigma ruler v tip text v';
const EDIT = '| source geopkg vecnew feathernew mem | -edits pencil -save -poly -node v -form -trash -cut -copy -paste -undo -redo | label diagram labelpin -labeloff -labeloff -labeloff -labeloff -labeloff | csw | python | book | nn | -tri -poly v -poly -blob -poly -poly -poly -poly -poly -poly -blob -vecnew -scis -scis -rot -form -rot v';
const RAIL = ['vecadd', 'checker', 'comma', 'featheradd', 'virtual', 'pgadd v', 'globeadd v', 'wcsadd', 'wfsadd v', 'vecnew v'];
const MENU = [['Pro<u>y</u>ecto', 49], ['<u>E</u>dición', 41], ['<u>V</u>er', 25.5], ['<u>C</u>apa', 32.5], ['Con<u>f</u>iguración', 72], ['Co<u>m</u>plementos', 76], ['Vect<u>o</u>rial', 48], ['<u>R</u>áster', 36], ['Base de <u>d</u>atos', 69], ['<u>W</u>eb', 30], ['Pro<u>c</u>esos', 49], ['Ay<u>u</u>da', 30]];
const BROWSER = [['star', 'Favoritos'], ['proj', 'Inicio del proyecto', 1], ['home', 'Inicio', 1], ['folder', 'C:\\', 1], ['folder', 'G:\\', 1], ['geopkg', 'GeoPackage'], ['feather', 'SpatiaLite'], ['pg', 'PostGIS'], ['mssql', 'MSSQL'], ['oracle', 'Oracle'], ['db2', 'DB2'], ['globe', 'WMS/WMTS'], ['globe', 'XYZ Tiles', 1], ['wcs', 'WCS'], ['wfs', 'WFS'], ['ows', 'OWS'], ['arc', 'ArcGisMapServer'], ['arcf', 'ArcGisFeatureServer'], ['geonode', 'GeoNode']];

const dot = (c, r = 4) => `<svg class="ico" viewBox="0 0 16 16"><circle cx="8" cy="8" r="${r}" fill="${c}" stroke="#46506e" stroke-width=".8"/></svg>`;
const box = c => `<svg class="ico" viewBox="0 0 16 16"><path d="M0 0h16v16H0z" fill="${c}"/></svg>`;
const line = '<svg class="ico" viewBox="0 0 16 16"><path d="M0 8h16" stroke="#5a6aa5" stroke-width="1.300"/></svg>';
const dashed = '<svg class="ico" viewBox="0 0 16 16"><path d="M.7.7h14.600v14.600H.7z" fill="#fff" stroke="#888" stroke-dasharray="1.500 1.500"/></svg>';
const ico = n => `<svg class="ico"><use href="#i-${n}"/></svg>`;

// flags: g group, r root entry, c checked, m memory layer, s selected
const top_ = [['actividades', 'gc', ''], ['PolideportivosMunicipales_4326', '', dot('#5b76f5')], ['MercadosMunicipales_4326', '', dot('#ee37ea')], ['EscuelasInfantiles_4326', '', dot('#f78f74')], ['Bibliotecas_4326', '', dot('#2fe8f2')], ['ColegiosPublicos_4326', '', dot('#32e58c')], ['CentrosdeDia_4326', '', dot('#f6cf55')], ['Intersección', 'm', dot('#a5b53c', 3.4)], ['Intersección', 'm', dot('#444', 1.3)]];
const tail = [['inside-airbnb', 'r'], ['inside-airbnb copiar', 'r'], ['agenda-eventos-culturales-gratis', 'r'], ['agenda-eventos-culturales-hora', 'r'], ['edificios-madrid', 'rx', box('#5b6aa3')]];
const PROJECTS = {
  input: { coord: '425997,4472820', layers: [...top_, ['centrosalud', 'c', dot('#444', 1.8)], ['farmacias', '', dot('#c5f58a')], ['transporte', 'gc', ''], ['Hecho buffer', 'm', box('#cacde1')], ['líneas-metro', '', line], ['Disuelto', 'm', dashed], ['Hecho buffer-est', 'cms', box('#6289c4')], ['estmetro', '', dot('#4f8050', 3.4)], ...tail, ['BARRIOS', 'rxc', box('#e3e8f4')]] },
  output: { coord: '425431,4468706', layers: [...top_, ['centrosalud', '', dot('#444', 1.8)], ['Diferencia', 'cms', dot('#14508c', 2)], ['farmacias', '', dot('#c5f58a')], ['transporte', 'gc', ''], ['Hecho buffer', 'm', box('#cacde1')], ['líneas-metro', '', line], ['Disuelto', 'cm', dashed], ['Hecho buffer-est', 'm', box('#8790b7')], ['estmetro', '', dot('#4f8050', 3.4)], ...tail] }
};

// Map data is digitised on two sheets, west and east, each with its own origin and scale
const WEST = ([x, y]) => [+(x / 2.6133 - 4).toFixed(1), +(y / 2.1189 - 7).toFixed(1)];
const EAST = ([x, y]) => [+(x / 2.529 + 576).toFixed(1), +(y / 2.1189 - 7).toFixed(1)];
const pts = s => s.trim().split(/\s+/).map(p => p.split(',').map(Number));
const both = (w, e) => [...pts(w).map(WEST), ...pts(e).map(EAST)];
const path = list => 'M' + list.map(p => p.join(' ')).join('L');

const LAND = both(
  '140,14 150,38 168,62 180,70 190,92 215,118 212,150 233,173 214,205 213,218 222,233 245,241 335,264 332,290 320,315 354,355 364,405 360,435 343,455 338,475 334,500 339,512 325,545 324,565 352,590 395,576 425,588 475,592 500,598 532,594 582,606 615,635 640,645 648,660 658,675 668,700 686,743 680,767 740,752 770,759 822,753 822,870 760,910 750,930 741,963 755,1030 775,1070 792,1102 767,1110 737,1145 700,1158 682,1160 685,1152 632,1158 582,1163 532,1160 487,1146 457,1130 348,1130 365,1155 430,1250 500,1340 521,1385 548,1365 575,1388 640,1402 688,1426 735,1402 820,1420 910,1440 1080,1400 1140,1382 1185,1375 1166,1552',
  '800,1552 830,1512 850,1480 880,1460 888,1415 868,1432 864,1410 900,1370 900,1310 917,1295 912,1268 945,1210 960,1165 975,1172 1000,1178 1035,1178 1065,1195 1120,1175 1130,1120 1139,1095 1130,1040 1108,1005 1085,985 1050,960 1050,1000 1020,1005 985,1028 880,1018 800,1007 745,1018 714,1005 700,975 728,908 715,908 721,880 703,850 728,845 728,820 745,815 775,822 835,812 900,785 950,775 1018,758 1018,745 1043,743 1022,705 1040,683 1080,680 1060,650 1062,620 1093,573 1085,562 1030,548 1022,475 1005,450 1008,433 980,418 975,375 950,360 900,335 890,325 890,303 880,300 885,237 830,240 765,228 715,242 685,258 640,295 605,313 540,315 510,275 475,255 450,238 400,250 320,262 235,260 210,238 153,220 140,230 115,175 110,165 87,157 87,128 40,128 8,108 45,70 60,50 40,20 28,14');

const LIMITS_W = ['335,473 600,555 660,550 750,515 860,520 880,532 915,532 920,478 935,485 945,487 1005,490 1040,465 1012,445 1055,393 1098,300 1112,285 1105,258 1095,262 1042,246 1060,212 1110,138 1130,135 1150,105 1230,70 1265,60 1310,14', '600,555 593,562 607,578 598,586 884,621 886,600 862,520', '598,586 600,605 615,635', '884,621 922,690 918,700 882,714 845,732 822,753', '882,714 985,765 1060,832 1095,835 1160,820 1200,830', '965,487 968,530 975,550 972,530 990,518 1070,520 1140,532 1240,555 1260,545 1340,545', '1060,212 1110,243 1160,253 1200,275 1250,293 1270,290 1362,294 1430,245 1470,235 1568,195', '1055,393 1110,422 1230,430 1360,400', '1110,422 1060,487 1070,515 1085,522', '1362,294 1350,330 1362,395 1400,430 1460,458 1500,447 1568,445', '1140,532 1165,555 1175,595 1210,620 1205,635 1250,650 1320,660', '1220,430 1240,465 1225,485 1242,555 1280,595', '1458,460 1430,560 1410,740 1425,810 1430,880 1395,950 1405,1040 1568,1060', '1322,655 1312,870', '1195,770 1210,745 1230,740 1410,745', '1215,800 1345,802 1470,805 1568,815', '1250,630 1270,600 1340,630 1400,590 1440,580 1530,572 1568,585', '1345,802 1380,890 1415,910', '1225,865 1270,872 1330,870 1430,880 1568,885', '1195,770 1215,840 1260,920 1280,948 1350,950 1500,935 1568,940', '890,1080 960,1040 1040,1030 1180,970', '890,1080 905,1110 1020,1140 1100,1180 1160,1210 1200,1220 1300,1222', '545,1365 700,1245 800,1160 890,1080', '700,1245 735,1295 875,1318 885,1350 880,1365 840,1390 812,1418', '810,1155 900,1230 950,1232 1030,1180 1100,1140 1180,1110 1230,1108', '875,1318 880,1300 930,1275 900,1230', '1185,1382 1195,1240 1230,1100 1260,1050 1310,995', '960,1317 1195,1312 1315,1333 1320,1230', '1185,1382 1300,1390 1440,1392 1480,1415 1568,1412', '1315,1333 1290,1475 1350,1525 1390,1532 1440,1522 1460,1490 1475,1420 1465,1330 1440,1300 1435,1260', '1380,1090 1385,1350 1392,1548', '1460,1420 1460,1548', '1480,1420 1530,1480 1568,1500', '1475,1380 1470,1330 1440,1260 1500,1225 1540,1130', '1040,1030 1020,1070 1025,1140', '1060,1110 1100,1090 1160,1060 1185,1070 1175,1110', '1185,970 1190,1000 1215,1000 1215,1060 1230,1100', '1310,995 1290,950', '1310,995 1400,1000', '1000,1250 1080,1210 1140,1212 1090,1260 1085,1300', '1240,1250 1255,1310', '1380,1090 1300,1060 1240,1055', '1510,700 1505,820 1495,935 1460,1080', '1418,640 1568,650', '1418,695 1568,700', '1545,490 1540,445 1555,400 1568,385'];
const LIMITS_E = ['0,212 75,180 87,165', '145,235 142,290 40,385 30,470 27,510 60,590 95,640', '0,447 110,450 240,480 330,545 390,625 530,690 560,740 620,778 700,785 730,805 835,812', '540,315 555,372 465,415 430,475 367,520 378,540 500,548 570,570 690,575', '545,380 543,482 690,482 735,520 738,545 710,555 690,580 565,665 530,690', '378,540 380,570 280,568 180,575 110,610', '430,655 365,695 365,718', '200,718 290,727 370,718 870,723 1043,745', '690,575 670,597 713,632 690,650', '95,520 85,495 130,455', '85,520 100,560 110,640 120,720 128,830 115,900 105,945', '0,645 110,650 200,720 270,790 330,880 390,940 430,985', '0,695 90,700 200,680 240,655 290,655', '0,780 100,740 230,715', '0,815 110,770 230,740', '0,870 110,860 230,840 300,805 440,765', '410,720 440,790 460,830 475,880 478,1008', '510,720 540,790 530,815', '0,880 60,885 55,1050', '0,940 90,945 220,990 400,990 478,970', '478,1008 560,1020 635,1044 680,970 690,950 728,908', '720,1010 655,1053 870,1165 910,1170 960,1163', '0,1055 55,1057 150,1060 200,1110 265,1150 490,1207 510,1215 545,1220 565,1268 530,1297 440,1275', '0,1105 55,1050', '340,1165 400,1030 430,985', '350,1000 320,1080 270,1145', '170,1000 200,1050 290,1080 370,1080 440,1070', '490,1207 510,1165 480,1150 490,1120 560,1110 600,1090', '25,1150 50,1230 100,1280 170,1297 330,1262 370,1255 390,1180', '170,1297 168,1160 210,1120', '0,1415 60,1400 160,1340 170,1297', '95,1240 80,1140', '180,1250 230,1215', '440,1275 430,1340 370,1325 360,1285 320,1300 315,1345 460,1420 485,1393 540,1430 600,1470 665,1490 690,1405 720,1380', '540,1297 650,1360 720,1380 780,1420 880,1450', '0,1470 20,1500 50,1515 55,1540', '400,850 440,840 470,840', '150,850 200,800 260,760', '290,617 390,617', '690,482 685,545 690,575', '210,850 240,900 235,940'];

const STOPS = both(
  '1386,273 1385,312 1397,354 1573,252 1164,354 1228,388 1179,436 1291,439 1212,475 1230,509 1324,500 1450,462 1219,550 1238,596 1256,662 1375,556 1472,530 1520,513 1358,632 1425,587 1480,570 1490,585 1525,608 1420,650 1519,657 1417,692 1327,680 1511,702 1322,715 1375,725 1400,735 1460,760 1430,770 1153,759 1203,742 1243,745 1245,798 1200,830 1222,860 1207,937 1300,760 1325,800 1360,740 1310,840 1410,820 1370,800 1350,880 1330,920 1290,900 1290,945 1275,960 1340,960 1400,890 1400,940 1440,945 1500,965 1460,905 1505,895 1505,825 1505,780 1520,740 1540,770 1540,840 1550,910 1545,935 1300,1000 1350,1005 1283,1020 1262,1050 1330,1050 1300,1070 1258,1090 1217,1127 1410,1038 1400,1060 1387,1112 1430,1055 1482,1073 1385,1100 1375,1178 1425,1160 1497,1140 1355,1228 1302,1202 1375,1295 1381,1332 1389,1423 1391,1490 1391,1568 1238,1568 1570,1045 1086,975 1144,996 1062,1025 1010,1063 950,1042 885,1080 1014,1118 1040,1160 1000,1200 960,1227 1055,1190 1105,1195 1160,1160 1213,1221 1165,1210 1137,1252 1088,1294 1047,1312 954,1323 919,1383 708,721 670,746 657,791 639,839 592,845 547,859 568,919 612,950 657,980 693,1020 718,1050 739,1083 795,1122 840,1145 855,1172 888,1214 720,1125 676,1138 632,1145 572,1125 477,1110 335,1115 317,1144 246,1137 123,1135 8,1040 12,1082 722,1225 657,1273 775,1438 236,1524 356,1497 443,1498 548,1485 505,1530',
  '288,0 303,72 137,104 112,200 57,252 92,278 137,341 155,370 188,407 173,434 120,420 103,440 75,475 113,508 188,517 236,502 273,522 278,558 208,573 300,602 226,643 153,667 105,692 65,728 447,606 604,382 676,512 758,577 646,655 602,687 489,726 424,768 361,787 285,810 173,799 100,800 235,833 180,850 110,865 250,860 194,895 314,885 272,924 377,892 445,890 497,850 541,848 463,933 534,925 380,967 60,933 50,900 5,513 10,605 4,657 10,750 15,790 20,850 20,900 50,995 107,1018 50,1046 181,1028 243,1060 298,1104 396,1109 482,1078 525,1080 573,1099 20,1100 -20,1135 55,1122 85,1140 128,1165 172,1177 225,1188 272,1210 370,1246 397,1270 412,1327 453,1344 551,1395 608,1427 785,935 831,926 931,918 1016,923 1089,930 1016,974 1076,974 928,1374 1087,1574');

const SITES_IN = both(
  '738,1015 736,1151 853,1130 983,1058 1023,1057 1081,1018 1210,390 1329,430 1336,492 1461,443 1214,532 1265,605 1357,544 1457,569 1371,606 1381,617 1244,652 1300,651 1350,690 1501,658 1457,703 1290,738 1371,787 1294,800 1240,804 1501,793 1336,837 1244,858 1216,886 1244,906 1290,896 1369,912 1484,881 1553,865 1555,938 1507,962 1352,978 1271,997 1390,1011 1315,1046 1380,1072 1329,1083 1348,1091 1235,1092 1380,1116 1350,1128 1532,1099 1210,1123 1300,1185 1404,1189 1133,1179 1098,1227 1138,1253 1329,1245 985,1315 1392,1332 939,1406 751,1414 1419,1433 1430,1476 1350,1491 346,1513 379,1507 432,1496 534,1489 511,1524',
  '143,370 102,416 102,459 148,498 252,539 193,596 303,611 49,736 52,753 55,762 101,774 176,784 210,794 287,806 287,829 127,862 79,856 325,911 451,763 650,674 913,1394 785,959 966,914 1030,903 1055,940 161,1013 220,1058 392,1109 489,1066 552,1066 62,1120 81,1172 166,1154 139,1189 269,1195 264,1208 390,1332');
const SITES_OUT = both(
  '783,170 53,392 102,491 123,712 741,659 587,794 497,858 1112,888 1098,458 1148,571 1453,382 1464,827 1514,1046 1193,1000 1135,1033 966,1092 943,1140 1065,1130 1269,1165 1269,1251 1235,1319 1336,1379 1263,1497 981,1536 979,1267 768,1245 786,1289 832,1277',
  '335,21 115,649 605,771 684,548 1042,274 1469,607 1387,643 1483,769 1395,1137 1023,1425 816,886 896,945 976,959 353,924 426,962 519,890 343,1115 133,1092 69,1194 89,1248 206,1250 49,1270 523,1264 107,1333 376,1360');

const circles = (list, r) => list.map(([x, y]) => `<circle cx="${x}" cy="${y}" r="${r}"/>`).join('');

function mapSvg(kind) {
  const limits = [...LIMITS_W.map(l => path(pts(l).map(WEST))), ...LIMITS_E.map(l => path(pts(l).map(EAST)))].join('');
  const base = `<path class="land" d="${path(LAND)}Z"/><path class="limits" d="${limits}"/>`;
  const overlay = kind === 'input'
    ? `<g class="buffers">${circles(STOPS, 16.5)}</g><g class="sites">${circles([...SITES_IN, ...SITES_OUT], 1.4)}</g>`
    : `<mask id="outside"><path d="M-20-20h1240v780H-20z" fill="#fff"/><g fill="#000">${circles(STOPS, 16.2)}</g></mask><g class="outline" mask="url(#outside)">${circles(STOPS, 16.5)}</g><g class="sites">${circles(SITES_OUT, 1.6)}</g>`;
  return `<svg viewBox="0 0 1180 723">${base}${overlay}</svg>`;
}

const slots = s => s.split(' ').map(t => {
  if (t === '|') return '<i class="grip"></i>';
  if (t === 'v') return '<i class="drop"></i>';
  const cls = t[0] === '-' ? ' off' : t[0] === '+' ? ' pressed' : '';
  return `<span class="slot${cls}">${ico(t.replace(/^[-+]/, ''))}</span>`;
}).join('');

function layerRow([name, f, sym]) {
  const group = f.includes('g'), root = f.includes('r'), on = f.includes('c'), sel = f.includes('s');
  const cls = ['row', group || root ? '' : 'child', on ? '' : 'hidden', on && !group ? 'strong' : '', sel ? 'selected' : ''].join(' ');
  const twist = group || root ? `<i class="twist ${group ? 'open' : f.includes('x') ? '' : 'closed'}"></i>` : '<i class="twist"></i>';
  const icon = group ? ico('group') : sym || ico('pts');
  return `<div class="${cls}">${twist}<span class="check${on ? ' on' : ''}"></span><span class="sym">${icon}</span><span class="name">${name}</span>${f.includes('m') ? '<svg class="chip"><use href="#i-chip"/></svg>' : ''}</div>`;
}

for (const win of document.querySelectorAll('.win')) {
  const project = PROJECTS[win.dataset.project];
  win.append(document.getElementById('window-template').content.cloneNode(true));
  const fill = (sel, html) => { win.querySelector(sel).innerHTML = html; };
  fill('.menubar', MENU.map(([t, w]) => `<span style="width:${w}px">${t}</span>`).join(''));
  fill('.toolbar-main', slots(MAIN));
  fill('.toolbar-edit', slots(EDIT));
  fill('.rail', '<i class="dots"></i>' + RAIL.map(r => { const [n, v] = r.split(' '); return `<div class="tool">${ico(n)}${v ? '<i class="drop"></i>' : ''}</div>`; }).join(''));
  fill('.browser-tools', slots('add refresh filter collapse info'));
  fill('.layer-tools', slots('brush groupadd eye filter eps v expand collapse remove'));
  fill('.browser-tree', BROWSER.map(([i, t, c]) => `<div class="row"><i class="twist ${c ? 'closed' : ''}"></i>${ico(i)}<span class="name">${t}</span></div>`).join(''));
  fill('.layer-tree', project.layers.map(layerRow).join(''));
  fill('.canvas', mapSvg(win.dataset.project));
  win.querySelector('.f-coord').textContent = project.coord;
  if (win.dataset.project === 'output') win.querySelector('.scroll').classList.add('tall');
}
```
